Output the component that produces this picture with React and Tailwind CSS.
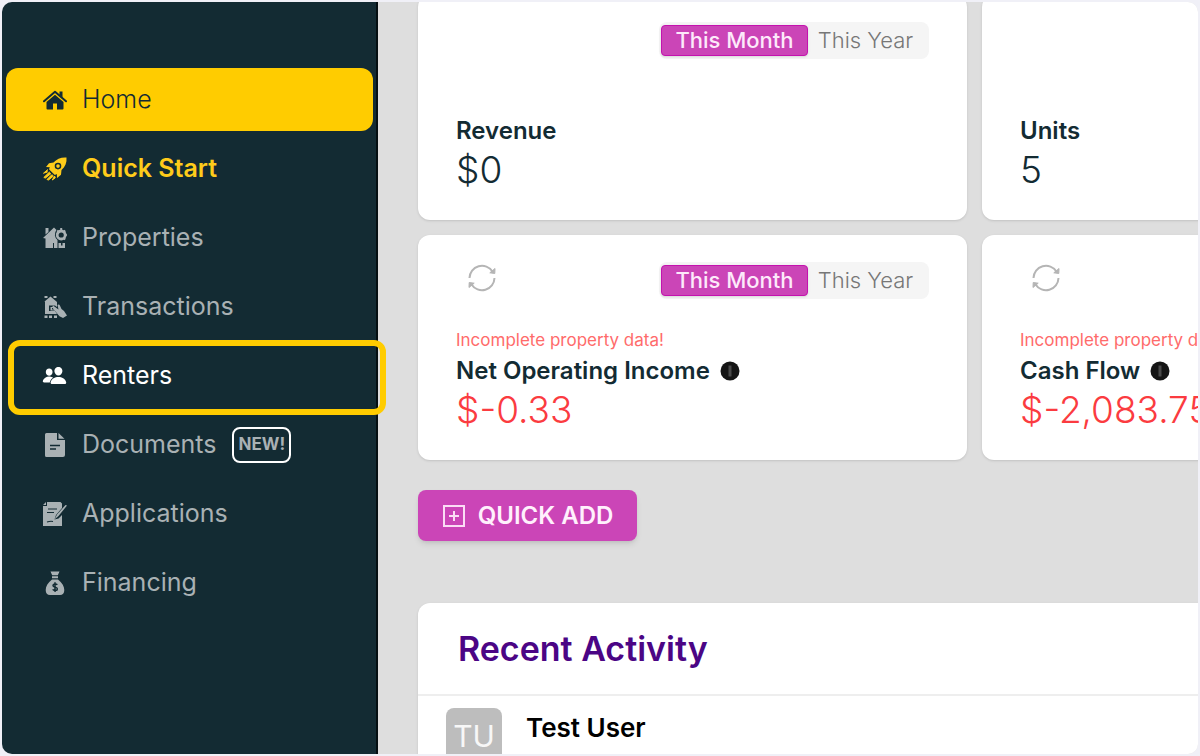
import React from 'react';
import { IoPeople } from 'react-icons/io5';

const HomeIcon = () => (
    <svg viewBox="0 0 24 24" className="w-6 h-6" fill="currentColor" aria-hidden="true">
        <path d="M12 6.800 20.500 14v6.500a1 1 0 0 1-1 1H14v-6h-4v6H4.500a1 1 0 0 1-1-1V14Z" />
        <path d="M1 13.300 12 3.800l11 9.500" fill="none" stroke="currentColor" strokeWidth="2" strokeLinecap="round" strokeLinejoin="round" />
        <path d="M16.500 3.500h3v6l-3-2.600z" />
    </svg>
);

const RocketIcon = () => (
    <svg viewBox="0 0 24 24" className="w-6 h-6" fill="currentColor" aria-hidden="true">
        <path fillRule="evenodd" d="M23.500.500c-5.500-.400-9.800 1.500-13 5L6 6.200 3 10l3.800.300L6 12.200l5.800 5.800 2-1 .300 4 3.900-3.200.500-4.700c3.700-3.200 5.500-7.500 5-12.600ZM15 5.800a3.300 3.300 0 1 0 0 6.600 3.300 3.300 0 0 0 0-6.600Z" />
        <circle cx="15" cy="9.100" r="1.800" />
        <path d="M4.800 12.500.5 16.200l4-1.200M6.500 15 .8 20.500 2.500 21l5.500-4.500M9 17.500 4 22.500l1.500.5 5-4M11.500 19l-2.200 4 3-2.200z" stroke="currentColor" strokeWidth="1" strokeLinejoin="round" />
    </svg>
);

const PropertiesIcon = () => (
    <svg viewBox="0 0 24 24" className="w-6 h-6" fill="currentColor" aria-hidden="true">
        <path d="M2.500 2h3v4l-3 2.500ZM0 12 11 1.500 13.500 4a7 7 0 0 0 1 10V22H2.500v-9.500Z" />
        <circle cx="18.200" cy="9" r="4" fill="none" stroke="currentColor" strokeWidth="2.800" />
        <path d="M18.200 2v2M23.800 9H22M22.200 4.600l-1.400 1.200M22.200 13.400l-1.400-1.200M14.200 4.600l1.400 1.200" stroke="currentColor" strokeWidth="2" />
        <path d="M15.500 17H18v2.500h1.500V17H22v5h-6.500z" />
        <path d="M10.500 17v5" stroke="#132b33" strokeWidth="1" />
    </svg>
);

const TransactionsIcon = () => (
    <svg viewBox="0 0 24 24" className="w-6 h-6" fill="currentColor" aria-hidden="true">
        <path d="M1.500 1h3v2h-3zM10.500 1h3v2h-3zM1.500 20.500h3V23h-3zM6 20.500h3V23H6zM11 20.500h3V23h-3z" />
        <path fillRule="evenodd" d="M7.500 1.500 14 7v5l-2-1.500H6V16h6l2 3H2V7l-.5-.5ZM7.500 12h4v1H9v1.500h3v1H7.500Z" />
        <path d="m10 10.500 5.500 4-1-4.500c1-1.200 2.300-.2 2.500.8l1.500 3.200 2.500 2L24 20.500l-4 2.500-3.500-1.700-3-3.500-4.300-5.300Z" />
    </svg>
);

const DocumentIcon = () => (
    <svg viewBox="0 0 24 24" className="w-6 h-6" fill="currentColor" aria-hidden="true">
        <path d="M3.500 0H14v7h8v15a2 2 0 0 1-2 2H3.500a1.500 1.500 0 0 1-1.500-1.500v-21A1.500 1.500 0 0 1 3.500 0Z" />
        <path d="m15.500 0 6 5.700h-6z" />
        <path d="M7 12.500h10M7 16h6" stroke="#132b33" strokeWidth="1.500" />
    </svg>
);

const ApplicationIcon = () => (
    <svg viewBox="0 0 24 24" className="w-6 h-6" fill="currentColor" aria-hidden="true">
        <path d="M4 0h13.500L19 1.500V6l-6 7-1.500 4.500 4-1L19 13v11H0V4h4ZM0 3l3-3v3Z" />
        <path d="M5 7h9M4 10.500h7M4 20c3-1 4-1 6-.5" stroke="#132b33" strokeWidth="1.200" fill="none" />
        <path d="M24 3.500 15.500 14l-4 3.500 2.500-5L22.500 3Z" />
    </svg>
);

const FinancingIcon = () => (
    <svg viewBox="0 0 24 24" className="w-6 h-6" fill="currentColor" aria-hidden="true">
        <path d="M7.500.5h9l-1.700 3.700H9.200zM9 5.300h6v2H9zM9 8.500h6c4 3 6.300 7 6.300 10.500 0 3.400-1.600 5-4.300 5H7c-2.700 0-4.300-1.600-4.300-5C2.700 15.500 5 11.500 9 8.500Z" />
        <path d="M14.300 13.800c-1-1.300-4.300-1.200-4.300.7 0 2.100 4.400 1.200 4.400 3.400 0 2-3.600 2.100-4.700.5M12 11.300v9.700" stroke="#132b33" strokeWidth="1.500" fill="none" />
    </svg>
);

const RefreshIcon = () => (
    <svg viewBox="0 0 28 28" className="w-7 h-7" fill="none" stroke="#b5b5b5" strokeWidth="2" aria-hidden="true">
        <path d="M1.500 14A12.500 12.500 0 0 1 24.500 7.500M26.500 14A12.500 12.500 0 0 1 3.500 20.500" />
        <path d="m27 4.500-.2 5-5-.7zM1 23.500l.2-5 5 .7z" fill="#b5b5b5" strokeWidth="1" />
    </svg>
);

const InfoIcon = () => (
    <svg viewBox="0 0 20 20" className="w-5 h-5" aria-hidden="true">
        <circle cx="10" cy="10" r="9.500" fill="#151515" />
        <path d="M10 4.500v11" stroke="#4a4a4a" strokeWidth="3" />
    </svg>
);

const AddIcon = () => (
    <svg viewBox="0 0 24 24" className="w-6 h-6" fill="none" stroke="#fbdcf5" strokeWidth="2" aria-hidden="true">
        <path d="M2 2h20v20H2zM12 7v10M7 12h10" />
    </svg>
);

const navItems = [
    { label: 'Home', icon: <HomeIcon />, tone: 'bg-[#ffcc00] text-[#132b33] font-light' },
    { label: 'Quick Start', icon: <RocketIcon />, tone: 'text-[#ffcc1a] font-semibold' },
    { label: 'Properties', icon: <PropertiesIcon />, tone: 'text-[#a9b1b4]' },
    { label: 'Transactions', icon: <TransactionsIcon />, tone: 'text-[#a9b1b4]' },
    { label: 'Renters', icon: <IoPeople size={25} />, tone: 'text-white', highlighted: true },
    { label: 'Documents', icon: <DocumentIcon />, tone: 'text-[#a9b1b4]', badge: 'NEW!' },
    { label: 'Applications', icon: <ApplicationIcon />, tone: 'text-[#a9b1b4]' },
    { label: 'Financing', icon: <FinancingIcon />, tone: 'text-[#a9b1b4]' },
];

const Sidebar = () => (
    <aside className="relative z-10 w-[376px] flex-none bg-[#132b33] border-r-2 border-[#050f12] pt-[66px] pl-1 pr-[3px]">
        <nav className="flex flex-col gap-1.5">
            {navItems.map((item) => (
                <a
                    key={item.label}
                    href="#"
                    className={`relative flex items-center h-[63px] pl-9 rounded-xl text-[25px] ${item.tone}`}
                >
                    <span className="flex-none w-[25px] mr-[15px] flex justify-center">{item.icon}</span>
                    {item.label}
                    {item.badge && (
                        <span className="ml-4 h-9 px-1 flex items-center border-2 border-white rounded-lg text-[17px] font-bold">
                            {item.badge}
                        </span>
                    )}
                    {item.highlighted && (
                        <span className="absolute -top-1 -bottom-2 left-0.5 -right-[13px] border-[6px] border-[#ffcc00] rounded-xl"></span>
                    )}
                </a>
            ))}
        </nav>
    </aside>
);

const PeriodToggle = () => (
    <div className="ml-auto h-[37px] flex items-center bg-[#f5f5f5] rounded-lg pl-0.5 text-[22px]">
        <button className="h-[31px] w-[147px] flex items-center justify-center bg-[#cb45b7] border border-[#c412ae] rounded-sm text-[#fdeafa] font-medium shadow-sm">
            This Month
        </button>
        <button className="w-[121px] pr-1.5 text-center text-[#777777] font-light">This Year</button>
    </div>
);

const StatCard = ({ title, value, warning, toggle, refresh, info }) => (
    <section className="min-h-[225px] bg-white rounded-xl shadow-sm px-[38px] pt-[27px] pb-[30px] flex flex-col justify-between">
        <div className="h-[37px] flex items-center">
            {refresh && (
                <button className="ml-3 -mt-1.5" aria-label="Refresh">
                    <RefreshIcon />
                </button>
            )}
            {toggle && <PeriodToggle />}
        </div>
        <div>
            {warning && <div className="text-[17px] leading-6 text-[#ff6b6b]">{warning}</div>}
            <div className="h-[38px] flex items-center gap-2.5 text-2xl font-semibold text-[#132b33]">
                <h2>{title}</h2>
                {info && <InfoIcon />}
            </div>
            <div className={`text-[37px] leading-10 font-light ${warning ? 'text-[#fb3b40]' : 'text-[#132b33]'}`}>{value}</div>
        </div>
    </section>
);

const RecentActivity = () => (
    <section className="bg-white rounded-t-xl shadow-sm">
        <h2 className="h-[93px] px-10 flex items-center border-b-2 border-[#eeeeee] text-[34px] font-semibold text-[#4b0585]">
            Recent Activity
        </h2>
        <div className="flex items-start gap-6 pl-7 pt-3">
            <div className="w-14 h-14 flex items-center justify-center bg-[#bdbdbd] rounded-lg text-3xl text-[#f7f7f7]">TU</div>
            <div className="text-[26px] leading-10 font-semibold text-black">Test User</div>
        </div>
    </section>
);

const App = () => {
    return (
        <div className="h-screen p-0.5 bg-[#f0f0f7] font-['Inter',sans-serif]">
            <div className="h-full flex rounded-[10px] overflow-hidden">
                <Sidebar />
                <main className="flex-1 min-w-0 pl-10 bg-[#dedede] overflow-hidden">
                    <div className="min-w-[1113px] -mt-[7px]">
                        <div className="grid grid-cols-2 gap-[15px]">
                            <StatCard title="Revenue" value="$0" toggle />
                            <StatCard title="Units" value="5" />
                            <StatCard title="Net Operating Income" value="$-0.33" warning="Incomplete property data!" toggle refresh info />
                            <StatCard title="Cash Flow" value="$-2,083.75" warning="Incomplete property data!" refresh info />
                        </div>
                        <button className="mt-[30px] mb-[62px] h-[51px] w-[219px] flex items-center justify-center gap-3 bg-[#cb45b7] rounded-lg shadow-md text-2xl font-semibold text-[#fff0fc]">
                            <AddIcon />
                            QUICK ADD
                        </button>
                        <RecentActivity />
                    </div>
                </main>
            </div>
        </div>
    );
};

export default App;
